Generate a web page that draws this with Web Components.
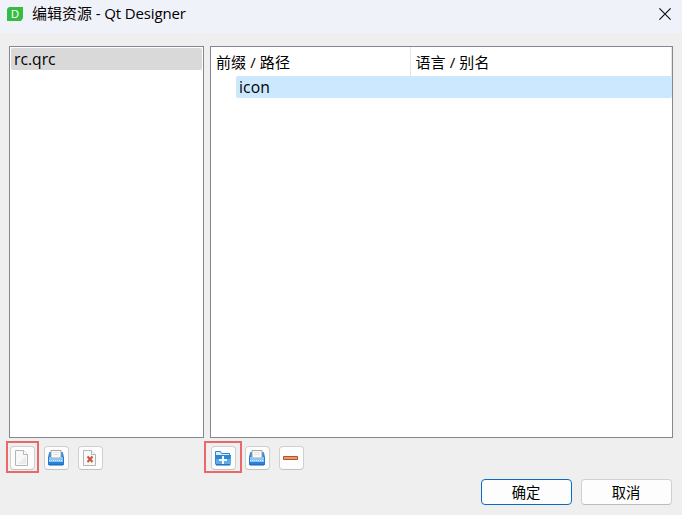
<!DOCTYPE html>
<html lang="zh-CN">
<head>
<meta charset="utf-8">
<title>编辑资源 - Qt Designer</title>
<style>
html, body { margin: 0; height: 100%; overflow: hidden; }
body { font-family: "Open Sans", "Noto Sans CJK SC", sans-serif; color: #000; background: #efefef; }
</style>
</head>
<body>
<resource-dialog></resource-dialog>
<script>
function define(name, html) {
  const template = document.createElement('template');
  template.innerHTML = html;
  customElements.define(name, class extends HTMLElement {
    constructor() {
      super();
      this.attachShadow({ mode: 'open' }).append(template.content.cloneNode(true));
    }
  });
}

define('title-bar', `
<style>
:host { display: flex; align-items: center; height: 33px; box-sizing: border-box; padding: 0 11px 5px 7px; background: #f0f2f9; font-size: 15px; line-height: 20px; white-space: pre; }
.logo { width: 16px; height: 14px; margin-right: 9px; background: #35bd42; color: #fff; font: 11px/14px "Liberation Sans", sans-serif; text-align: center; clip-path: polygon(2px 0, 100% 0, 100% 11px, 14px 100%, 0 100%, 0 2px); }
.caption { flex: 1; padding-bottom: 2px; }
svg { display: block; }
</style>
<span class="logo">D</span><span class="caption"><slot></slot></span>
<svg width="12" height="12" viewBox="0 0 12 12"><path d="M.4 .4L11.6 11.6M11.6 .4L.4 11.6" stroke="#111" stroke-width="1.2"/></svg>`);

define('list-panel', `
<style>
:host { display: block; box-sizing: border-box; height: 392px; border: 1px solid #828790; background: #fff; }
</style>
<slot></slot>`);

define('file-row', `
<style>
:host { display: block; height: 22px; margin: 1px 1px 0; padding-left: 3px; border-radius: 2px; background: #d9d9d9; font-size: 15.7px; line-height: 23px; }
</style>
<slot></slot>`);

define('tree-header', `
<style>
:host { display: grid; grid-template-columns: 200px 1fr; height: 29px; font-size: 15px; line-height: 30px; letter-spacing: .1px; }
div { padding-left: 5px; border-right: 1px solid #e5e5e5; white-space: pre; }
div + div { padding-left: 4.5px; }
</style>
<div><slot name="prefix"></slot></div><div><slot name="alias"></slot></div>`);

define('tree-row', `
<style>
:host { display: block; height: 22px; margin-left: 25px; padding-left: 3px; border-radius: 2px; background: #cce8ff; font-size: 15.7px; line-height: 22px; letter-spacing: .15px; }
</style>
<slot></slot>`);

define('tool-button', `
<style>
:host { display: block; box-sizing: border-box; width: 25px; height: 24px; padding: 3px 0 0 3px; border: 1px solid #d0d0d0; border-bottom-color: #c2c2c2; border-radius: 4px; background: #fdfdfd; }
</style>
<slot></slot>`);

define('push-button', `
<style>
:host { display: block; box-sizing: border-box; width: 91px; height: 26px; padding-right: 1px; border: 1px solid #d0d0d0; border-bottom-color: #bcbcbc; border-radius: 4px; background: #fdfdfd; text-align: center; font-size: 14.3px; line-height: 25px; }
:host([primary]) { border-color: #0a6cc8; }
</style>
<slot></slot>`);

const icons = {
  page: `<path d="M1.500 .5h8l4 4v11h-12z" fill="#f8f8f8" stroke="#b5b5b5"/><path d="M4 14l8-8v8z" fill="#ececef"/><path d="M9.500 .5v4h4" fill="#fff" stroke="#b5b5b5"/>`,
  remove: `<path d="M1.500 .5h8l4 4v11h-12z" fill="#f8f8f8" stroke="#b5b5b5"/><path d="M9.500 .5v4h4" fill="#fff" stroke="#b5b5b5"/><path d="M5.500 6.500l5 5.500M10.500 6.500l-5 5.500" stroke="#c95239" stroke-width="2"/>`,
  open: `<path d="M1.500 2.500h13l1 5v7h-15v-7z" fill="#2b83d6" stroke="#3a8ddd"/><path d="M3 8V.5h10V8z" fill="#fafafa" stroke="#a5a5a5"/><path d="M5 2.500h6M5 4.500h6" stroke="#e4e4e4"/><path d="M.5 7h2.500l1 1h8l1-1h2.500v5H.5z" fill="#8cc5f2"/><path d="M1 10.500h14" stroke="#d4ebfc" stroke-dasharray="1 1"/><path d="M.5 12h15v3H.5z" fill="#2a83d8"/><path d="M1 15h14" stroke="#0d62bb"/><path d="M.5 7v8M15.500 7v8" stroke="#2178cf"/>`,
  folder: `<path d="M.5 13.500v-12h5l1 2h8v10z" fill="#d8edfc" stroke="#3484ca"/><path d="M0 5h16l-.5 10H.5z" fill="#2d86d9"/><path d="M1 9h14v5H1z" fill="#62a9e5"/><path d="M1 15h14" stroke="#1165bc"/><path d="M8 6v8M4 10h8" stroke="#eef8ff" stroke-width="2"/>`,
  minus: `<path d="M.5 6.500h14v3h-14z" fill="#e79a6c" stroke="#b4532b"/>`
};
customElements.define('line-icon', class extends HTMLElement {
  constructor() {
    super();
    this.attachShadow({ mode: 'open' });
  }
  connectedCallback() {
    this.shadowRoot.innerHTML = `<style>:host, svg { display: block; width: 16px; height: 16px; overflow: visible; }</style>
      <svg viewBox="0 0 16 16" fill="none">${icons[this.getAttribute('name')]}</svg>`;
  }
});

define('resource-dialog', `
<style>
:host { display: block; width: 682px; height: 515px; background: #efefef; }
main { display: grid; grid-template-columns: 195px 463px; column-gap: 6px; padding: 13px 9px 0; }
.tools { display: flex; gap: 9px; padding: 8px 0 0 1px; }
.first, .second { position: relative; }
/* Highlight frames lie over each toolbar's first button. */
.first::after, .second::after { content: ""; position: absolute; box-sizing: border-box; border: 2px solid #ea6868; top: -5px; left: -4px; width: 33px; height: 32px; }
.second::after { left: -7px; width: 38px; }
footer { display: flex; justify-content: flex-end; gap: 9px; padding: 9px 10px 0 0; }
.latin { letter-spacing: -.13px; }
</style>
<title-bar>编辑资源<span class="latin"> - Qt Designer</span></title-bar>
<main>
  <list-panel><file-row>rc.qrc</file-row></list-panel>
  <list-panel>
    <tree-header><span slot="prefix">前缀 / 路径</span><span slot="alias">语言 / 别名</span></tree-header>
    <tree-row>icon</tree-row>
  </list-panel>
  <div class="tools">
    <div class="first"><tool-button><line-icon name="page"></line-icon></tool-button></div>
    <tool-button><line-icon name="open"></line-icon></tool-button>
    <tool-button><line-icon name="remove"></line-icon></tool-button>
  </div>
  <div class="tools">
    <div class="second"><tool-button><line-icon name="folder"></line-icon></tool-button></div>
    <tool-button><line-icon name="open"></line-icon></tool-button>
    <tool-button><line-icon name="minus"></line-icon></tool-button>
  </div>
</main>
<footer><push-button primary>确定</push-button><push-button>取消</push-button></footer>`);
</script>
</body>
</html>
